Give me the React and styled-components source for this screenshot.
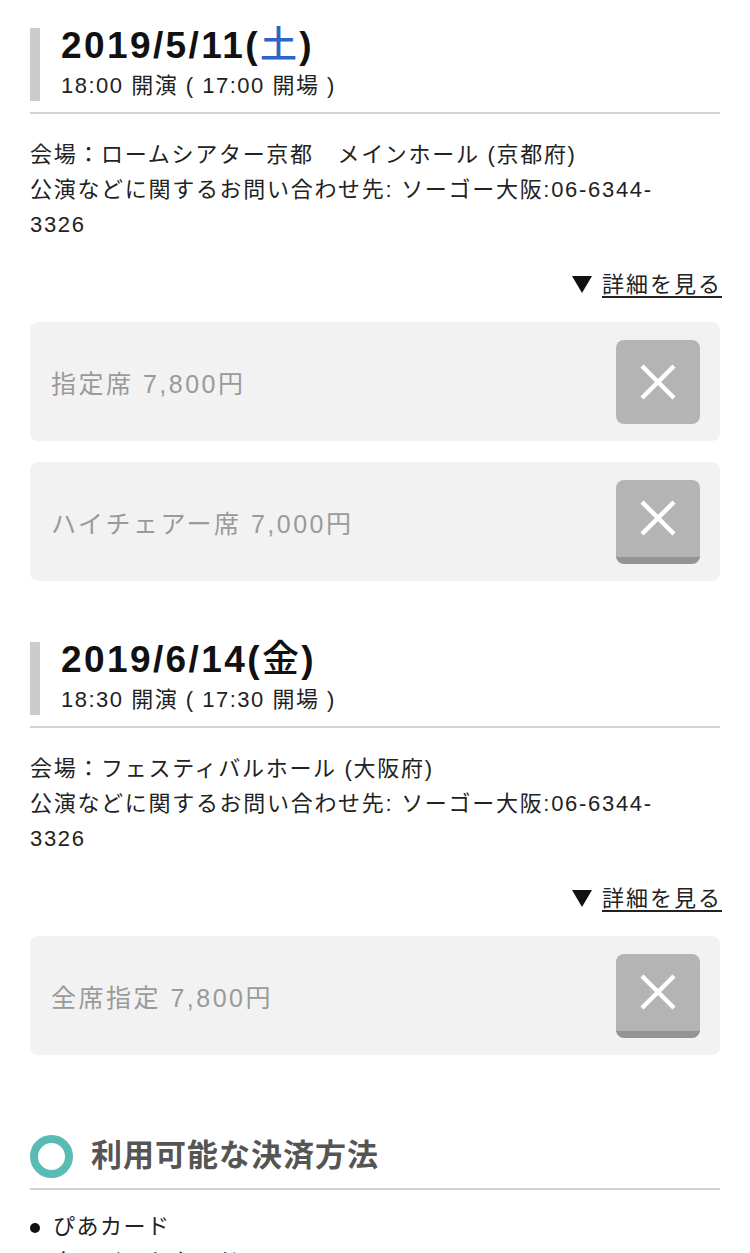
import React from "react";
import styled, { createGlobalStyle } from "styled-components";

const Global = createGlobalStyle`
  html, body { margin: 0; padding: 0; background: #fff; }
  body { font-family: "Liberation Sans", "Noto Sans CJK JP", "Noto Sans", sans-serif; color: #222; }
`;

const Page = styled.div`
  padding: 28px 30px 0 30px;
  box-sizing: border-box;
  width: 750px;
  height: 1253px;
  overflow: hidden;
`;

const Performance = styled.section`
  margin-bottom: ${(p) => (p.$last ? "0" : "61px")};
`;

const DateHead = styled.div`
  border-left: 10px solid #cccccc;
  padding-left: 21px;
  display: flex;
  flex-direction: column;
  height: 73px;
  justify-content: space-between;
`;

const DateTitle = styled.h2`
  margin: -3px 0 0 0;
  font-size: 37px;
  line-height: 42px;
  font-weight: 700;
  color: #111;
  letter-spacing: 2.4px;
`;

const Day = styled.span`
  color: ${(p) => p.$color || "inherit"};
  font-weight: 500;
`;

const Time = styled.div`
  font-size: 22px;
  line-height: 28px;
  color: #222;
  margin-bottom: 1px;
  letter-spacing: 1.5px;
`;

const Rule = styled.hr`
  border: 0;
  height: 2px;
  background: #d2d2d2;
  margin: 11px 0 0 0;
`;

const Info = styled.p`
  margin: 23px 0 0 0;
  font-size: 22px;
  line-height: 35px;
  color: #222;
  letter-spacing: 1.7px;
`;

const DetailRow = styled.div`
  display: flex;
  justify-content: flex-end;
  align-items: center;
  margin-top: 25px;
  font-size: 22px;
  line-height: 35px;
  gap: 10px;
`;

const Triangle = styled.span`
  width: 0;
  height: 0;
  border-left: 10px solid transparent;
  border-right: 10px solid transparent;
  border-top: 17px solid #111;
`;

const DetailLink = styled.a`
  color: #222;
  text-decoration: underline;
  text-underline-offset: 4px;
  letter-spacing: 2px;
  margin-right: -2px;
`;

const Tickets = styled.div`
  display: flex;
  flex-direction: column;
  gap: 21px;
  margin-top: 20px;
`;

const Ticket = styled.div`
  background: #f2f2f2;
  border-radius: 8px;
  height: 119px;
  box-sizing: border-box;
  padding: 0 20px 0 21px;
  display: flex;
  align-items: center;
  justify-content: space-between;
`;

const TicketName = styled.span`
  font-size: 25px;
  color: #9a9a9a;
  letter-spacing: 2.5px;
`;

const SoldOut = styled.div`
  width: 84px;
  height: 84px;
  border-radius: 8px;
  background: #b4b4b4;
  box-sizing: border-box;
  display: flex;
  align-items: center;
  justify-content: center;
  border-bottom: ${(p) => (p.$raised ? "7px solid #949494" : "0")};
`;

const Cross = () => (
  <svg width="38" height="38" viewBox="0 0 38 38">
    <path d="M3 3 L35 35 M35 3 L3 35" stroke="#fff" strokeWidth="4.5" strokeLinecap="butt" />
  </svg>
);

const Section = styled.section`
  margin-top: 79px;
`;

const SectionHead = styled.div`
  display: flex;
  align-items: center;
  gap: 18px;
  padding-bottom: 10px;
  border-bottom: 2px solid #d2d2d2;
`;

const Ring = styled.span`
  width: 43px;
  height: 43px;
  box-sizing: border-box;
  border-radius: 50%;
  border: 8px solid #58bcb5;
`;

const SectionTitle = styled.h3`
  margin: 0;
  font-size: 31px;
  line-height: 44px;
  font-weight: 700;
  color: #555;
  letter-spacing: 1px;
`;

const List = styled.ul`
  margin: 19px 0 0 0;
  padding: 0;
  list-style: none;
  font-size: 22px;
  line-height: 35px;
  color: #222;
  letter-spacing: 1.5px;
`;

const Item = styled.li`
  display: flex;
  align-items: center;
  gap: 13px;
  &::before {
    content: "";
    width: 10px;
    height: 10px;
    border-radius: 50%;
    background: #111;
    flex-shrink: 0;
    margin-top: 2px;
  }
`;

const performances = [
  {
    date: "2019/5/11",
    day: "土",
    dayColor: "#2f63c4",
    time: "18:00 開演 ( 17:00 開場 )",
    venue: "会場：ロームシアター京都　メインホール (京都府)",
    tickets: [
      { name: "指定席 7,800円", raised: false },
      { name: "ハイチェアー席 7,000円", raised: true },
    ],
  },
  {
    date: "2019/6/14",
    day: "金",
    time: "18:30 開演 ( 17:30 開場 )",
    venue: "会場：フェスティバルホール (大阪府)",
    tickets: [{ name: "全席指定 7,800円", raised: true }],
  },
];

export default function App() {
  return (
    <>
      <Global />
      <Page>
        {performances.map((p, i) => (
          <Performance key={i} $last={i === performances.length - 1}>
            <DateHead>
              <DateTitle>
                {p.date}(<Day $color={p.dayColor}>{p.day}</Day>)
              </DateTitle>
              <Time>{p.time}</Time>
            </DateHead>
            <Rule />
            <Info>
              {p.venue}
              <br />
              公演などに関するお問い合わせ先: ソーゴー大阪:06-6344-
              <br />
              3326
            </Info>
            <DetailRow>
              <Triangle />
              <DetailLink href="#">詳細を見る</DetailLink>
            </DetailRow>
            <Tickets>
              {p.tickets.map((t, j) => (
                <Ticket key={j}>
                  <TicketName>{t.name}</TicketName>
                  <SoldOut $raised={t.raised}>
                    <Cross />
                  </SoldOut>
                </Ticket>
              ))}
            </Tickets>
          </Performance>
        ))}
        <Section>
          <SectionHead>
            <Ring />
            <SectionTitle>利用可能な決済方法</SectionTitle>
          </SectionHead>
          <List>
            <Item>ぴあカード</Item>
            <Item>クレジットカード</Item>
          </List>
        </Section>
      </Page>
    </>
  );
}
